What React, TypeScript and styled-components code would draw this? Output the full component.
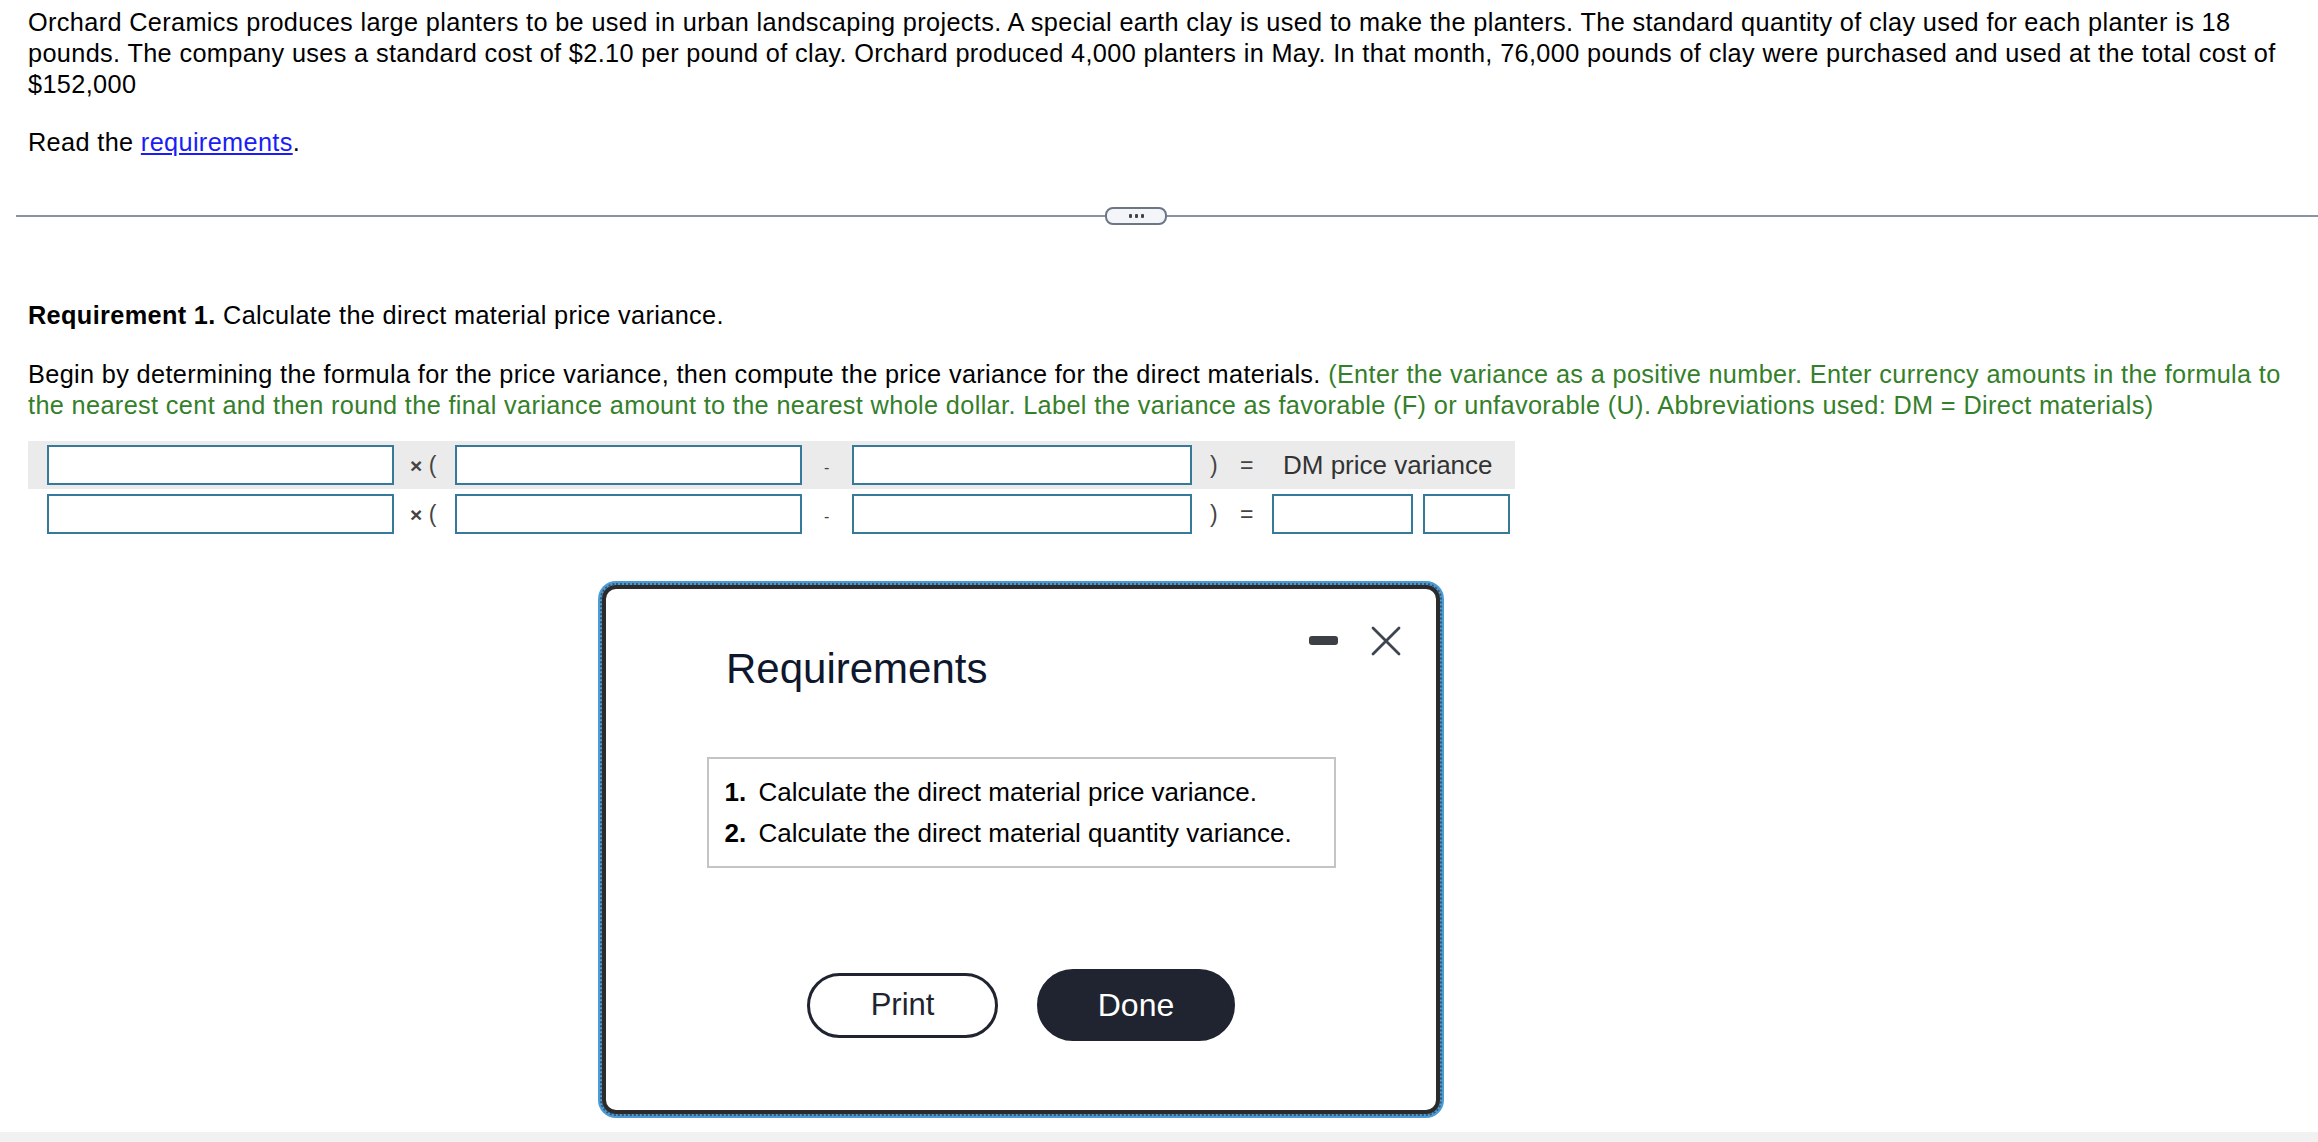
import styled, { createGlobalStyle } from "styled-components";

const GlobalStyle = createGlobalStyle`
  html, body {
    margin: 0;
    padding: 0;
    background: #fff;
  }
  body {
    font-family: "Liberation Sans", Arial, sans-serif;
    color: #000;
  }
`;

const Page = styled.div`
  position: relative;
  height: 1142px;
  display: flex;
  flex-direction: column;
  overflow: hidden;
`;

const Main = styled.div`
  flex: 1;
`;

const Section = styled.div`
  padding: 7px 36px 0 28px;
`;

const Para = styled.p<{ $gap?: number }>`
  margin: ${(p) => p.$gap ?? 0}px 0 0 0;
  font-size: 25.3px;
  letter-spacing: 0.35px;
  line-height: 31px;
`;

const Link = styled.a`
  color: #1a1df5;
  text-decoration: underline;
  cursor: pointer;
`;

const Hint = styled.span`
  color: #34802a;
`;

const Divider = styled.div`
  display: flex;
  align-items: center;
  height: 18px;
  margin-top: 49px;
  padding-left: 16px;
`;

const Rule = styled.div<{ $fixed?: boolean }>`
  height: 2px;
  background: #8a93a3;
  flex: ${(p) => (p.$fixed ? "0 0 1089px" : "1")};
`;

const MoreBtn = styled.button`
  width: 62px;
  height: 18px;
  padding: 0;
  border: 2px solid #6b7785;
  border-radius: 8px;
  background: #f3f5f8;
  display: flex;
  align-items: center;
  justify-content: center;
  gap: 3px;
`;

const Dot = styled.span`
  width: 3px;
  height: 4px;
  border-radius: 1px;
  background: #3d4650;
`;

const Formula = styled.div`
  margin-top: 20px;
  display: flex;
  flex-direction: column;
  gap: 4px;
`;

const FRow = styled.div<{ $shade?: boolean }>`
  display: grid;
  grid-template-columns: 19px 347px 61px 347px 50px 340px 40px 36px 247px;
  align-items: center;
  width: 1487px;
  height: ${(p) => (p.$shade ? 48 : 42)}px;
  background: ${(p) => (p.$shade ? "#ebebeb" : "transparent")};
`;

const Box = styled.div<{ $w?: number }>`
  box-sizing: border-box;
  width: ${(p) => (p.$w ? `${p.$w}px` : "100%")};
  height: 40px;
  border: 2px solid #36799a;
  background: #fff;
`;

const Op = styled.span<{ $pad?: number }>`
  font-size: 23px;
  color: #444;
  padding-left: ${(p) => p.$pad ?? 0}px;
  white-space: pre;
`;

const Times = styled.span`
  font-size: 21px;
  font-weight: 700;
`;

const Minus = styled.span`
  font-size: 16px;
`;

const Result = styled.div`
  display: flex;
  align-items: center;
  gap: 10px;
  padding-left: 4px;
`;

const ResultLabel = styled.span`
  font-size: 26px;
  color: #333;
  padding-left: 15px;
  white-space: nowrap;
`;

const Modal = styled.div`
  position: absolute;
  left: 602px;
  top: 585px;
  width: 838px;
  height: 529px;
  box-sizing: border-box;
  background: #fff;
  border: 4px solid #2b2b2b;
  border-radius: 14px;
  outline: 2px dotted #3a5570;
  outline-offset: 0;
  box-shadow: 0 0 0 4px #4b9bd5;
  display: flex;
  flex-direction: column;
  align-items: center;
`;

const ModalHeader = styled.div`
  align-self: stretch;
  display: flex;
  justify-content: space-between;
  align-items: flex-start;
  padding: 36px 35px 0 120px;
`;

const Title = styled.h2`
  margin: 20px 0 0 0;
  font-family: "Liberation Sans", Arial, sans-serif;
  font-weight: 400;
  font-size: 42px;
  line-height: 48px;
  color: #0f172e;
`;

const Controls = styled.div`
  display: flex;
  align-items: center;
  gap: 33px;
  height: 31px;
`;

const MinBar = styled.span`
  width: 29px;
  height: 9px;
  border-radius: 3px;
  background: #3c3f44;
`;

const ReqList = styled.ol`
  box-sizing: border-box;
  width: 629px;
  margin: 64px 0 0 0;
  padding: 19px 16px;
  list-style: none;
  border: 2px solid #c4c4c4;
  display: flex;
  flex-direction: column;
  gap: 13px;
`;

const ReqItem = styled.li`
  font-size: 26px;
  line-height: 28px;
  color: #000;
  white-space: nowrap;
`;

const Num = styled.b`
  display: inline-block;
  width: 34px;
`;

const Buttons = styled.div`
  display: flex;
  align-items: center;
  gap: 39px;
  margin-top: 101px;
`;

const PillBtn = styled.button<{ $dark?: boolean }>`
  box-sizing: border-box;
  width: ${(p) => (p.$dark ? 198 : 191)}px;
  height: ${(p) => (p.$dark ? 72 : 65)}px;
  border-radius: 40px;
  border: 3px solid #1f2430;
  background: ${(p) => (p.$dark ? "#1f2430" : "#fff")};
  color: ${(p) => (p.$dark ? "#fff" : "#1f2430")};
  font-family: "Liberation Sans", Arial, sans-serif;
  font-size: ${(p) => (p.$dark ? 32 : 31)}px;
  cursor: pointer;
`;

const ScrollTrack = styled.div`
  height: 10px;
  background: #f1f1f1;
`;

const CloseIcon = () => (
  <svg width="30" height="30" viewBox="0 0 30 30">
    <path d="M2 2 L28 28 M28 2 L2 28" stroke="#3c4550" strokeWidth="2.8" strokeLinecap="round" />
  </svg>
);

const FormulaRow = ({ shade }: { shade?: boolean }) => (
  <FRow $shade={shade}>
    <span />
    <Box />
    <Op $pad={16}>
      <Times>×</Times> (
    </Op>
    <Box />
    <Op $pad={22}>
      <Minus>-</Minus>
    </Op>
    <Box />
    <Op $pad={18}>)</Op>
    <Op $pad={8}>=</Op>
    {shade ? (
      <ResultLabel>DM price variance</ResultLabel>
    ) : (
      <Result>
        <Box $w={141} />
        <Box $w={87} />
      </Result>
    )}
  </FRow>
);

export default function App() {
  return (
    <Page>
      <GlobalStyle />
      <Main>
        <Section>
          <Para>
            Orchard Ceramics produces large planters to be used in urban landscaping projects. A special earth clay is
            used to make the planters. The standard quantity of clay used for each planter is 18 pounds. The company
            uses a standard cost of $2.10 per pound of clay. Orchard produced 4,000 planters in May. In that month,
            76,000 pounds of clay were purchased and used at the total cost of $152,000
          </Para>
          <Para $gap={27}>
            Read the <Link>requirements</Link>.
          </Para>
        </Section>

        <Divider>
          <Rule $fixed />
          <MoreBtn>
            <Dot />
            <Dot />
            <Dot />
          </MoreBtn>
          <Rule />
        </Divider>

        <Section>
          <Para $gap={68}>
            <b>Requirement 1.</b> Calculate the direct material price variance.
          </Para>
          <Para $gap={28}>
            Begin by determining the formula for the price variance, then compute the price variance for the direct
            materials.{" "}
            <Hint>
              (Enter the variance as a positive number. Enter currency amounts in the formula to the nearest cent and
              then round the final variance amount to the nearest whole dollar. Label the variance as favorable (F) or
              unfavorable (U). Abbreviations used: DM = Direct materials)
            </Hint>
          </Para>
          <Formula>
            <FormulaRow shade />
            <FormulaRow />
          </Formula>
        </Section>
      </Main>
      <ScrollTrack />

      <Modal>
        <ModalHeader>
          <Title>Requirements</Title>
          <Controls>
            <MinBar />
            <CloseIcon />
          </Controls>
        </ModalHeader>
        <ReqList>
          <ReqItem>
            <Num>1.</Num>Calculate the direct material price variance.
          </ReqItem>
          <ReqItem>
            <Num>2.</Num>Calculate the direct material quantity variance.
          </ReqItem>
        </ReqList>
        <Buttons>
          <PillBtn>Print</PillBtn>
          <PillBtn $dark>Done</PillBtn>
        </Buttons>
      </Modal>
    </Page>
  );
}
